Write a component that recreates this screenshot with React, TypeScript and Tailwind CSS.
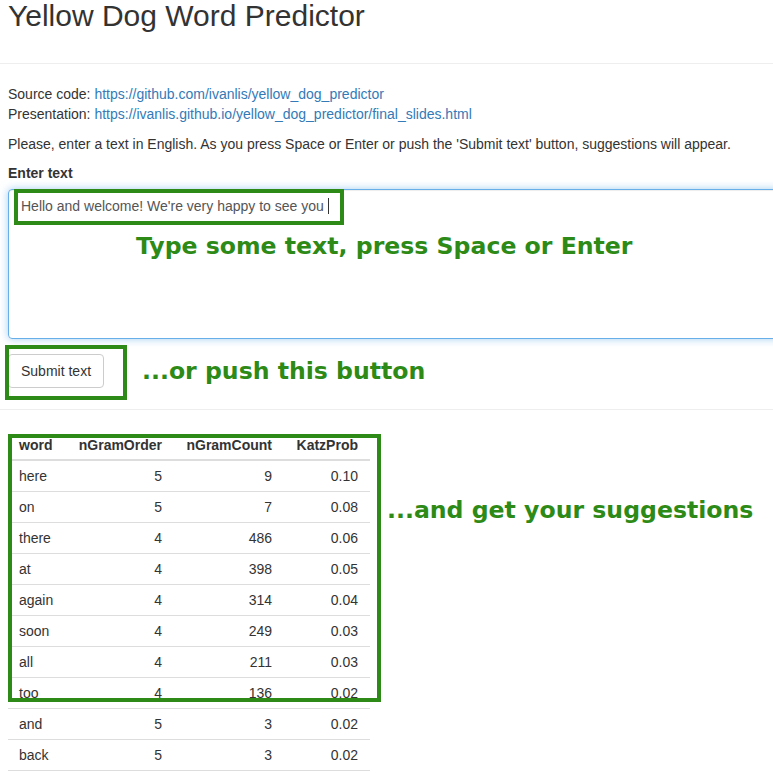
import React from "react";

const rows = [
  ["here", "5", "9", "0.10"],
  ["on", "5", "7", "0.08"],
  ["there", "4", "486", "0.06"],
  ["at", "4", "398", "0.05"],
  ["again", "4", "314", "0.04"],
  ["soon", "4", "249", "0.03"],
  ["all", "4", "211", "0.03"],
  ["too", "4", "136", "0.02"],
  ["and", "5", "3", "0.02"],
  ["back", "5", "3", "0.02"],
];

const note = "absolute font-['DejaVu_Sans',Verdana,sans-serif] font-bold text-[#2d8a16] whitespace-nowrap leading-none text-[23.6px]";

export default function App() {
  return (
    <div className="relative w-[773px] h-[773px] overflow-hidden bg-white text-[14px] leading-[20px] text-[#333] font-['Liberation_Sans',Arial,sans-serif]">
      <div className="px-2">
        <h2 className="-mt-px text-[30px] leading-[33px] font-normal">Yellow Dog Word Predictor</h2>
      </div>
      <hr className="mt-[31px] border-0 border-t border-[#eee]" />

      <div className="px-2 pt-[20px]">
        <div>
          Source code: <a className="text-[#337ab7]">https://github.com/ivanlis/yellow_dog_predictor</a>
        </div>
        <div>
          Presentation: <a className="text-[#337ab7]">https://ivanlis.github.io/yellow_dog_predictor/final_slides.html</a>
        </div>
        <p className="mt-[10px]">
          Please, enter a text in English. As you press Space or Enter or push the 'Submit text' button, suggestions will appear.
        </p>
        <label className="block mt-[9px] font-bold">Enter text</label>
        <div className="mt-[6px] w-[800px] h-[150px] rounded border border-[#66afe9] shadow-[inset_0_1px_1px_rgba(0,0,0,0.075),0_0_8px_rgba(102,175,233,0.6)] px-3 py-[6px] text-[#555]">
          Hello and welcome! We're very happy to see you{" "}
          <span className="inline-block w-px h-[16px] align-[-3px] bg-[#333]" />
        </div>
        <button className="mt-[15px] h-[34px] px-3 rounded border border-[#ccc] bg-white text-[#333]">
          Submit text
        </button>
      </div>
      <hr className="mt-[21px] border-0 border-t border-[#eee]" />

      <div className="px-2 pt-[20px]">
        <table className="w-[362px] border-collapse table-fixed">
          <colgroup>
            <col className="w-[59px]" />
            <col className="w-[107px]" />
            <col className="w-[110px]" />
            <col className="w-[86px]" />
          </colgroup>
          <thead>
            <tr className="h-[30px] border-b-2 border-[#ddd]">
              <th className="pl-[11px] text-left font-bold">word</th>
              <th className="pr-3 text-right font-bold">nGramOrder</th>
              <th className="pr-3 text-right font-bold">nGramCount</th>
              <th className="pr-3 text-right font-bold">KatzProb</th>
            </tr>
          </thead>
          <tbody>
            {rows.map((r) => (
              <tr key={r[0]} className="h-[31px] border-b border-[#ddd]">
                <td className="pl-[11px]">{r[0]}</td>
                <td className="pr-3 text-right">{r[1]}</td>
                <td className="pr-3 text-right">{r[2]}</td>
                <td className="pr-3 text-right">{r[3]}</td>
              </tr>
            ))}
          </tbody>
        </table>
      </div>

      {/* annotations */}
      <div className="absolute left-[14px] top-[189px] w-[330px] h-[36px] border-4 border-[#2d8a16]" />
      <div className={`${note} left-[136px] top-[235px]`}>Type some text, press Space or Enter</div>
      <div className="absolute left-[5px] top-[345px] w-[122px] h-[55px] border-4 border-[#2d8a16]" />
      <div className={`${note} left-[142px] top-[360px]`}>...or push this button</div>
      <div className="absolute left-[8px] top-[434px] w-[373px] h-[268px] border-4 border-[#2d8a16]" />
      <div className={`${note} left-[387px] top-[499px]`}>...and get your suggestions</div>
    </div>
  );
}
